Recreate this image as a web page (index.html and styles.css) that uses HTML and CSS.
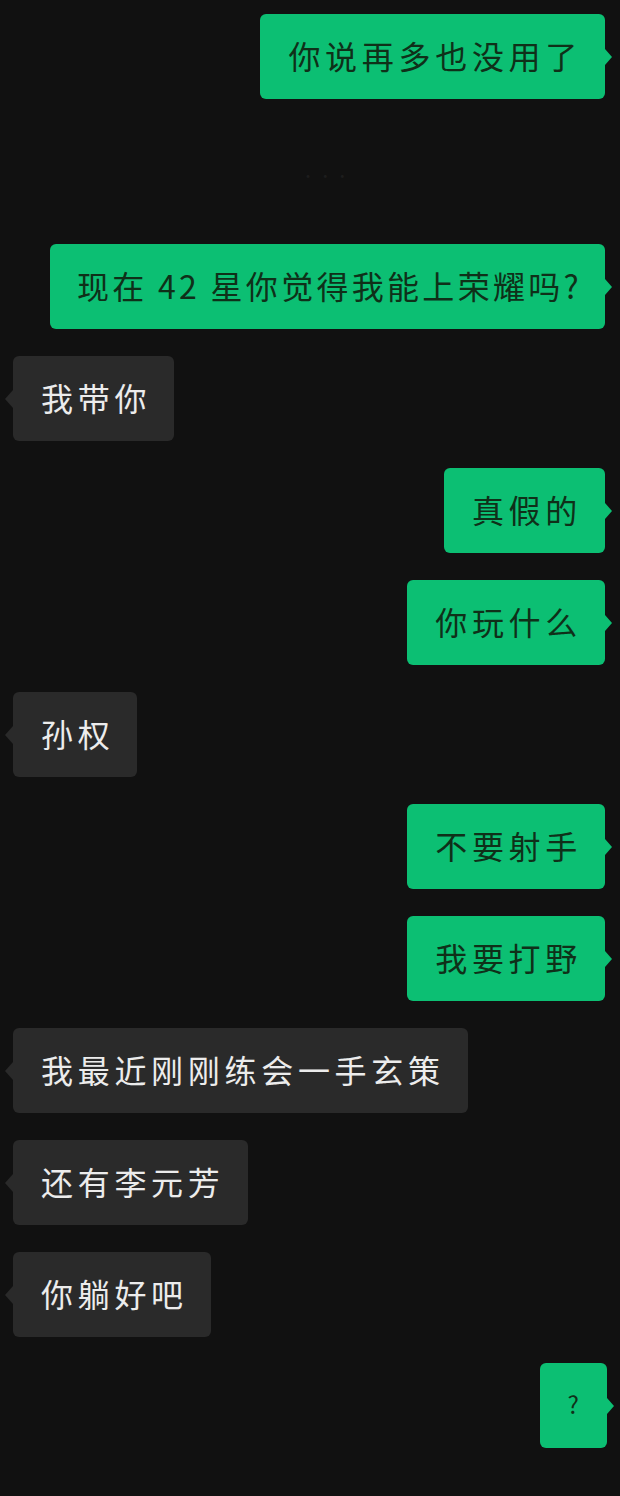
FILE: index.html
```html
<!DOCTYPE html>
<html>
<head>
    <meta charset="utf-8">
    <title>聊天记录</title>
    <link rel="stylesheet" href="styles.css">
</head>
<body>
    <div class="chat">
        <div class="msg me"><div class="bubble">你说再多也没用了</div></div>
        <div class="hint">• • •</div>
        <div class="msg me"><div class="bubble long">现在 42 星你觉得我能上荣耀吗?</div></div>
        <div class="msg other"><div class="bubble">我带你</div></div>
        <div class="msg me"><div class="bubble">真假的</div></div>
        <div class="msg me"><div class="bubble">你玩什么</div></div>
        <div class="msg other"><div class="bubble">孙权</div></div>
        <div class="msg me"><div class="bubble">不要射手</div></div>
        <div class="msg me"><div class="bubble">我要打野</div></div>
        <div class="msg other"><div class="bubble">我最近刚刚练会一手玄策</div></div>
        <div class="msg other"><div class="bubble">还有李元芳</div></div>
        <div class="msg other"><div class="bubble">你躺好吧</div></div>
        <div class="msg me last"><div class="bubble small">?</div></div>
    </div>
</body>
</html>
```

FILE: styles.css
```css
body { margin: 0; background: #111111; font-family: "Noto Sans CJK SC", "Noto Sans", sans-serif; }
.chat { display: flex; flex-direction: column; gap: 27px; padding: 14px 15px 40px 13px; }
.msg { display: flex; }
.msg.me { justify-content: flex-end; }
.msg.other { justify-content: flex-start; }
.bubble { position: relative; height: 85px; line-height: 82px; padding: 0 23px 3px 28px; box-sizing: border-box; font-size: 32px; letter-spacing: 4.7px; border-radius: 6px; white-space: nowrap; }
.bubble.long { letter-spacing: 3.3px; padding-left: 27px; }
.bubble.small { font-size: 24px; padding: 0 28px 3px; letter-spacing: 0; }
.me .bubble { background: #0cbf73; color: #0f3019; }
.other .bubble { background: #2a2a2a; color: #ececec; }
.me .bubble::after { content: ""; position: absolute; right: -7px; top: 35px; border-left: 7px solid #0cbf73; border-top: 8px solid transparent; border-bottom: 8px solid transparent; }
.other .bubble::before { content: ""; position: absolute; left: -8px; top: 34px; border-right: 8px solid #2a2a2a; border-top: 9px solid transparent; border-bottom: 9px solid transparent; }
.msg.last { margin-right: -2px; margin-top: -1px; }
.hint { height: 21px; margin: 39px 0 31px 288px; color: #1d1d1d; font-size: 14px; line-height: 21px; }
```
